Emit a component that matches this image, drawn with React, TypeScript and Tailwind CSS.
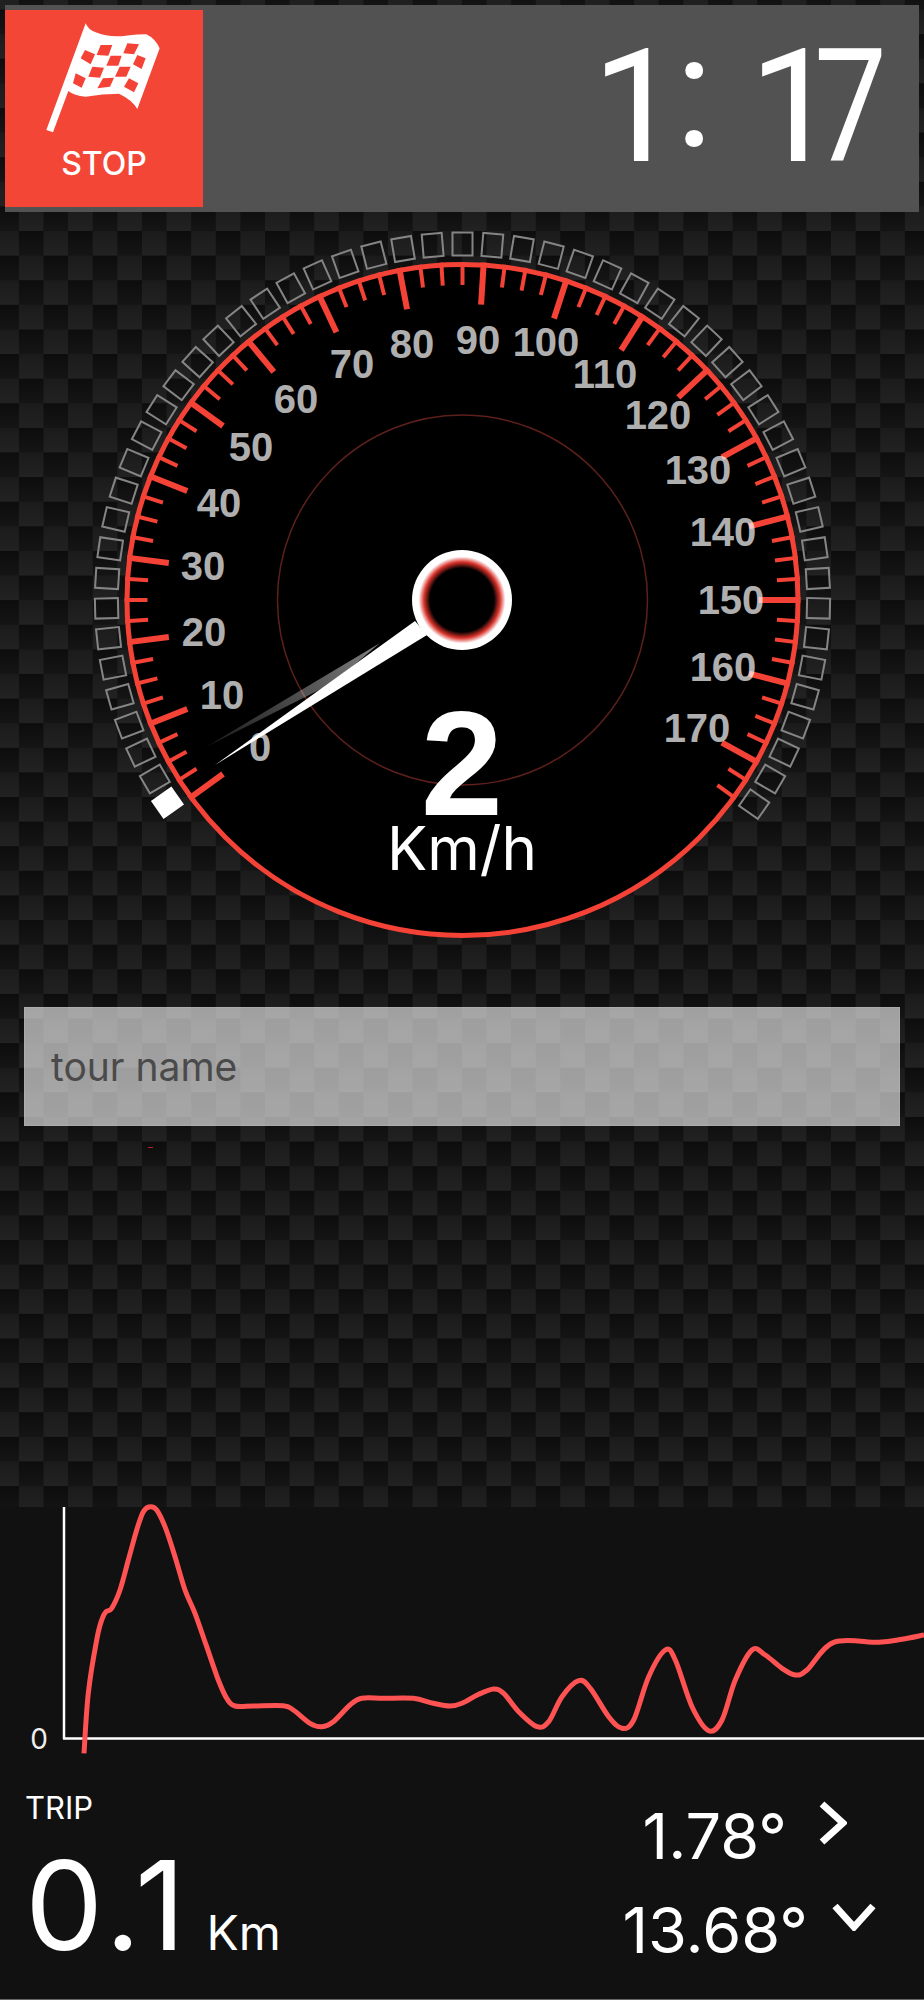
const RED = '#f44336';

// gauge geometry, angles in degrees clockwise from straight up
const CX = 462.5;
const CY = 600;
const START = -126;

const polar = (r: number, deg: number) => {
  const a = (deg * Math.PI) / 180;
  return { x: CX + r * Math.sin(a), y: CY - r * Math.cos(a) };
};

const ticks = Array.from({ length: 71 }, (_, i) => {
  const deg = START + i * 3.6;
  const major = i % 4 === 0;
  const a = polar(338, deg);
  const b = polar(major ? 296 : 315, deg);
  return { a, b, major };
});

const squares = Array.from({ length: 53 }, (_, i) => -125 + (i * 250) / 52);

const labels: Array<[string, number, number]> = [
  ['0', 260, 747],
  ['10', 222, 695],
  ['20', 204, 632],
  ['30', 203, 566],
  ['40', 219, 503],
  ['50', 251, 447],
  ['60', 296, 399],
  ['70', 352, 364],
  ['80', 412, 344],
  ['90', 478, 340],
  ['100', 546, 342],
  ['110', 605, 374],
  ['120', 658, 415],
  ['130', 698, 470],
  ['140', 723, 532],
  ['150', 731, 600],
  ['160', 723, 667],
  ['170', 697, 728],
];

// speed trace, traced from the picture (page coordinates)
const traceLeft = [
  [252, 820], [265, 640], [290, 480], [305, 420], [318, 395], [335, 385], [360, 330], [385, 240],
  [410, 150], [430, 95], [450, 80], [470, 90], [495, 140], [525, 230], [555, 330], [585, 400],
  [620, 500], [655, 600], [680, 655], [705, 678], [760, 678], [850, 677], [880, 690], [930, 730],
  [965, 740], [1000, 725], [1050, 675], [1085, 655], [1150, 655], [1240, 655], [1300, 670], [1350, 678],
];
const traceRight = [
  [0, 670], [50, 643], [95, 627], [125, 640], [170, 695], [225, 740], [260, 725], [300, 650],
  [350, 602], [385, 625], [440, 710], [480, 745], [515, 720], [560, 590], [610, 510], [640, 540],
  [690, 680], [740, 752], [780, 720], [820, 600], [870, 510], [910, 525], [960, 565], [1000, 585],
  [1035, 570], [1115, 487], [1250, 487], [1320, 478], [1386, 465],
];
const tracePoints = [
  ...traceLeft.map(([x, y]) => [x / 3, y / 3]),
  ...traceRight.map(([x, y]) => [462 + x / 3, y / 3]),
];

function smoothPath(pts: number[][]) {
  let d = `M${pts[0][0]} ${pts[0][1]}`;
  for (let i = 0; i < pts.length - 1; i++) {
    const p0 = pts[Math.max(i - 1, 0)];
    const p1 = pts[i];
    const p2 = pts[i + 1];
    const p3 = pts[Math.min(i + 2, pts.length - 1)];
    const c1x = p1[0] + (p2[0] - p0[0]) / 6;
    const c1y = p1[1] + (p2[1] - p0[1]) / 6;
    const c2x = p2[0] - (p3[0] - p1[0]) / 6;
    const c2y = p2[1] - (p3[1] - p1[1]) / 6;
    d += ` C${c1x.toFixed(1)} ${c1y.toFixed(1)} ${c2x.toFixed(1)} ${c2y.toFixed(1)} ${p2[0].toFixed(1)} ${p2[1].toFixed(1)}`;
  }
  return d;
}

const flagCells = [
  '215,90 250,90 238,122 203,120',
  '295,85 330,88 315,118 283,115',
  '168,105 198,118 185,148 155,130',
  '245,122 278,122 268,152 232,152',
  '325,120 350,130 338,162 312,148',
  '190,155 225,158 213,188 178,185',
  '272,155 305,155 292,185 258,185',
  '140,175 170,190 158,218 132,205',
  '222,190 255,188 243,215 205,220',
  '300,190 328,205 315,232 285,215',
];

function FlagIcon() {
  return (
    <svg viewBox="0 0 450 375" className="w-[150px] h-[125px] mt-[5px] block">
      <path
        fill="#fff"
        d="M170 25 Q178 45 200 52 Q240 68 290 62 Q330 58 352 58 Q378 70 392 100 L325 282 Q310 255 270 236 Q220 236 170 245 Q135 242 118 228 L72 352 L52 345 Z"
      />
      {flagCells.map((pts) => (
        <polygon key={pts} points={pts} fill={RED} />
      ))}
    </svg>
  );
}

function Gauge() {
  return (
    <svg viewBox="0 212 924 748" className="block w-[924px] h-[748px] font-['Liberation_Sans',sans-serif]">
      <defs>
        <radialGradient id="hub">
          <stop offset="0.64" stopColor="#000" />
          <stop offset="0.76" stopColor="#d8322a" />
          <stop offset="0.87" stopColor="#fff" />
          <stop offset="1" stopColor="#fff" />
        </radialGradient>
        <linearGradient id="needleShadow" x1="206" y1="747" x2="380" y2="643" gradientUnits="userSpaceOnUse">
          <stop offset="0" stopColor="#fff" stopOpacity="0.1" />
          <stop offset="1" stopColor="#fff" stopOpacity="0.5" />
        </linearGradient>
      </defs>

      {squares.map((deg, i) => {
        // the lit first square sits a touch further out than the rest
        const p = i === 0 ? polar(358, -124.5) : polar(356, deg);
        return (
          <rect
            key={deg}
            x={p.x - 10}
            y={p.y - 11.5}
            width={20}
            height={23}
            transform={`rotate(${deg} ${p.x} ${p.y})`}
            fill={i === 0 ? '#fff' : 'none'}
            stroke={i === 0 ? '#fff' : '#858585'}
            strokeWidth={2}
          />
        );
      })}

      <circle cx={CX} cy={CY} r={335.5} fill="#000" stroke={RED} strokeWidth={5} />
      <circle cx={CX} cy={CY} r={185} fill="none" stroke="#5e201b" strokeWidth={1.5} />

      {ticks.map((t, i) => (
        <line
          key={i}
          x1={t.a.x}
          y1={t.a.y}
          x2={t.b.x}
          y2={t.b.y}
          stroke={RED}
          strokeWidth={t.major ? 6 : 4}
        />
      ))}

      {labels.map(([text, x, y]) => (
        <text
          key={text}
          x={x}
          y={y + 14}
          textAnchor="middle"
          fontSize={40}
          fontWeight={700}
          fill="#fff"
          fillOpacity={0.7}
        >
          {text}
        </text>
      ))}

      <polygon points="206,747 380,643 333,683" fill="url(#needleShadow)" />
      <polygon points="215,765 415,621 427,635" fill="#fff" />
      <circle cx={462} cy={600} r={50} fill="url(#hub)" />

      <text x={462} y={815} textAnchor="middle" fontSize={148} fontWeight={700} fill="#fff">
        2
      </text>
      <text x={462} y={870} textAnchor="middle" fontSize={60} fill="#fff" className="font-[Inter,sans-serif]">
        Km/h
      </text>
    </svg>
  );
}

function SpeedChart() {
  return (
    <svg viewBox="0 1507 924 250" className="block w-[924px] h-[250px] overflow-visible font-[Inter,sans-serif]">
      <line x1={64} y1={1507} x2={64} y2={1739} stroke="#fff" strokeWidth={2.5} />
      <line x1={63} y1={1738.5} x2={924} y2={1738.5} stroke="#fff" strokeWidth={2.5} />
      <text x={39} y={1749} textAnchor="middle" fontSize={28} fill="#eee">
        0
      </text>
      <path
        d={smoothPath(tracePoints.map(([x, y]) => [x, 1480 + y]))}
        fill="none"
        stroke="#ff5252"
        strokeWidth={5}
      />
    </svg>
  );
}

export default function App() {
  return (
    <div className="w-[924px] h-[2000px] flex flex-col overflow-hidden bg-[#0f0f0f] font-[Inter,sans-serif] text-white [background-image:linear-gradient(rgba(255,255,255,0),rgba(255,255,255,0.03)),conic-gradient(#0d0d0d_25%,#1b1b1b_0_50%,#0d0d0d_0_75%,#1b1b1b_0)] [background-size:100%_24.61px,49.22px_49.22px] [background-position:0_34.1px,43.5px_34.1px]">
      {/* top bar */}
      <div className="mt-[5px] mx-[5px] h-[207px] py-[5px] bg-[#525252] flex items-stretch justify-between">
        <button className="w-[198px] bg-[#f44637] flex flex-col items-center">
          <FlagIcon />
          <span className="mt-[8px] text-[32px] leading-none font-medium">STOP</span>
        </button>
        <div className="flex items-center pr-[33px] -mt-[3px] text-[158px] leading-none font-[Roboto,sans-serif]">
          <span className="w-[83px] tracking-[-7px]">1</span>
          <span className="w-[74px] -translate-y-[15px]">:</span>
          <span className="w-[65px] tracking-[-25px]">1</span>
          <span className="w-[72px] origin-left scale-x-[0.82]">7</span>
        </div>
      </div>

      <Gauge />

      <div className="mt-[47px] mx-[24px] h-[119px] flex items-center px-[26px] bg-white/60 border border-white/10">
        <span className="text-[39px] leading-none text-[#4a4a4a]">tour name</span>
      </div>
      <div className="mt-[21px] ml-[148px] w-[5px] h-[1px] bg-[#b3202a]" />

      {/* bottom panel */}
      <div className="mt-auto h-[493px] bg-[#111111] border-b border-[#666] flex flex-col">
        <SpeedChart />
        <div className="flex justify-between">
          <div className="pl-[25px] pt-[35px]">
            <div className="text-[31px] leading-none">TRIP</div>
            <div className="flex items-baseline mt-[20px]">
              <span className="text-[124px] leading-none tracking-[5px]">0.1</span>
              <span className="ml-[16px] text-[48px] leading-none">Km</span>
            </div>
          </div>
          <div className="flex flex-col items-end pt-[48px]">
            <div className="flex items-start pr-[77px] gap-[32px]">
              <span className="text-[63px] leading-none">1.78°</span>
              <svg viewBox="0 0 28 44" className="w-[28px] h-[44px] -mt-[4px]">
                <polyline points="3,3 24,22 3,41" fill="none" stroke="#fff" strokeWidth={7} />
              </svg>
            </div>
            <div className="flex items-start pr-[48px] gap-[24px] mt-[31px]">
              <span className="text-[63px] leading-none">13.68°</span>
              <svg viewBox="0 0 44 28" className="w-[44px] h-[28px] mt-[4px]">
                <polyline points="3,3 22,24 41,3" fill="none" stroke="#fff" strokeWidth={7} />
              </svg>
            </div>
          </div>
        </div>
      </div>
    </div>
  );
}
